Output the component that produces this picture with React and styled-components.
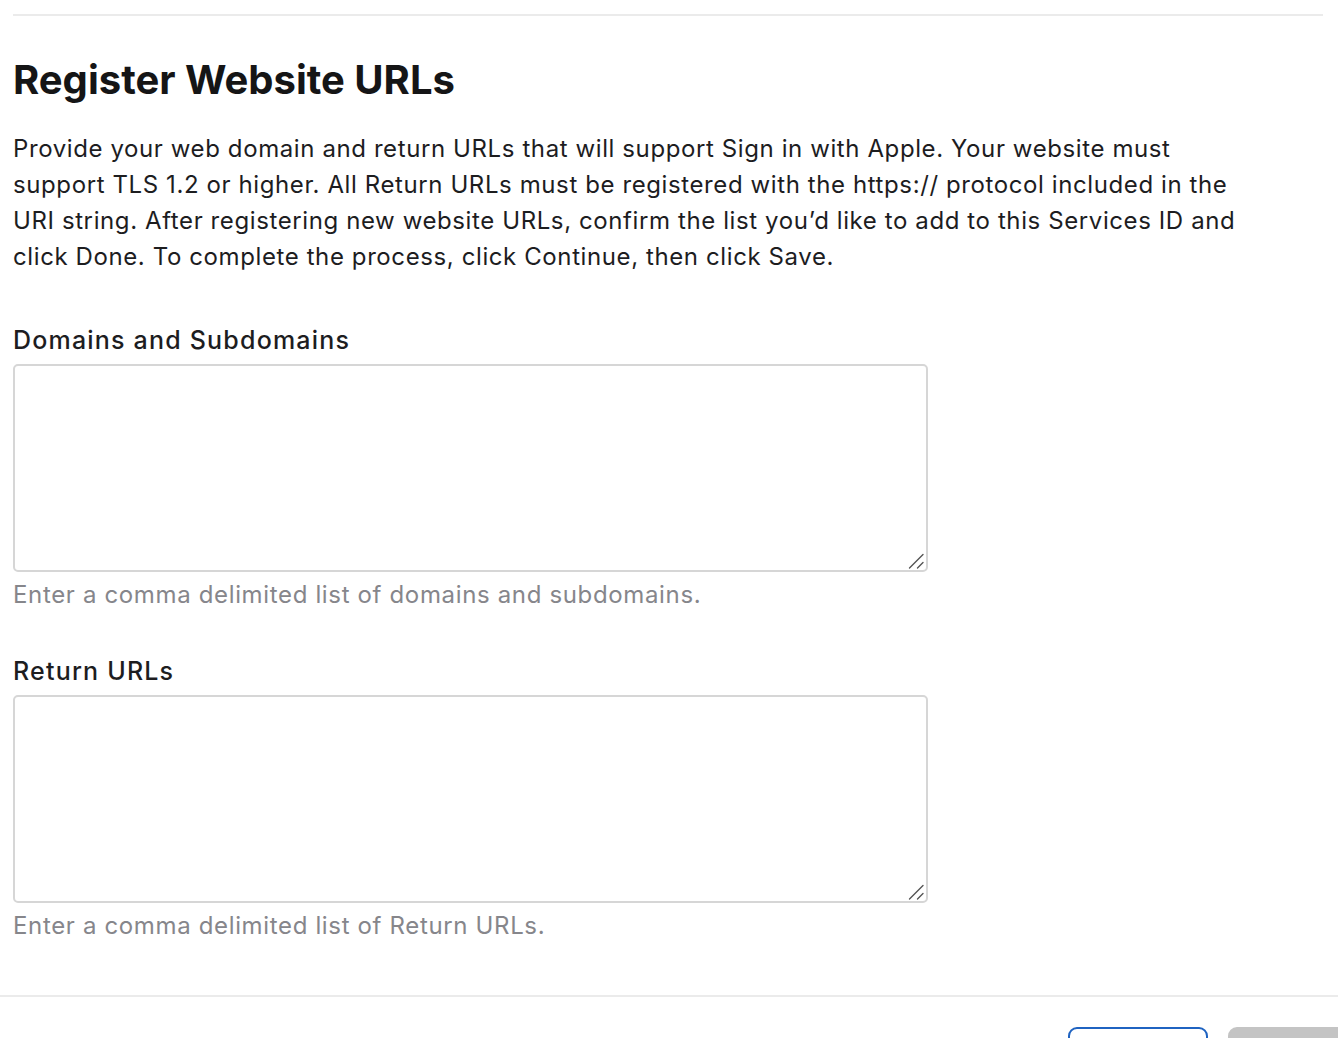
import React from "react";
import styled, { createGlobalStyle } from "styled-components";

const Global = createGlobalStyle`
  html, body { margin: 0; padding: 0; background: #fff; }
  body { font-family: Inter, "Noto Sans", "Liberation Sans", sans-serif; color: #1d1d1f; }
  * { box-sizing: border-box; }
`;

const Page = styled.div`
  width: 1338px;
  height: 1038px;
  overflow: hidden;
  display: flex;
  flex-direction: column;
`;

const Content = styled.section`
  padding: 14px 15px 0 13px;
  display: flex;
  flex-direction: column;
`;

const TopRule = styled.hr`
  margin: 0;
  border: 0;
  height: 2px;
  background: #ebebeb;
`;

const Title = styled.h1`
  margin: 40px 0 0;
  font-size: 40px;
  line-height: 48px;
  font-weight: 700;
  letter-spacing: 0px;
  color: #151516;
`;

const Intro = styled.p`
  margin: 27px 0 0;
  font-size: 24px;
  line-height: 36px;
  font-weight: 400;
  letter-spacing: 0.6px;
  white-space: nowrap;
  color: #1d1d1f;
`;

const Field = styled.div`
  display: flex;
  flex-direction: column;
  margin-top: ${(p) => p.$top}px;
`;

const Label = styled.label`
  font-size: 25px;
  line-height: 32px;
  font-weight: 500;
  letter-spacing: 1.2px;
  color: #1d1d1f;
`;

const AreaWrap = styled.div`
  position: relative;
  margin-top: 8px;
  width: 915px;
  height: 208px;
`;

const Area = styled.textarea`
  display: block;
  width: 100%;
  height: 100%;
  border: 2px solid #d6d6d6;
  border-radius: 5px;
  resize: none;
  font: inherit;
  font-size: 24px;
  padding: 8px 12px;
  outline: none;
  background: #fff;
`;

const Grip = styled.svg`
  position: absolute;
  right: 4px;
  bottom: 3px;
  width: 16px;
  height: 16px;
  pointer-events: none;
`;

const Help = styled.div`
  margin-top: 7px;
  font-size: 24px;
  line-height: 32px;
  letter-spacing: 0.65px;
  color: #86868b;
`;

const Footer = styled.footer`
  margin-top: auto;
  border-top: 2px solid #ebebeb;
  height: 43px;
  display: flex;
  align-items: flex-start;
  gap: 20px;
  padding: 30px 0 0 1068px;
`;

const Button = styled.button`
  flex: none;
  width: 140px;
  height: 44px;
  border-radius: 9px;
  font: inherit;
  font-size: 20px;
  border: 2px solid ${(p) => (p.$primary ? "#c4c4c4" : "#1f63c1")};
  background: ${(p) => (p.$primary ? "#c4c4c4" : "#fff")};
  color: ${(p) => (p.$primary ? "#fff" : "#1f63c1")};
`;

function TextBox() {
  return (
    <AreaWrap>
      <Area />
      <Grip viewBox="0 0 16 16">
        <path d="M1.5 15 L15 1.5 M9.5 15 L15 9.5" stroke="#555" strokeWidth="1.4" strokeLinecap="round" fill="none" />
      </Grip>
    </AreaWrap>
  );
}

export default function App() {
  return (
    <Page>
      <Global />
      <Content>
        <TopRule />
        <Title>Register Website URLs</Title>
        <Intro>
          Provide your web domain and return URLs that will support Sign in with Apple. Your website must
          <br />
          support TLS 1.2 or higher. All Return URLs must be registered with the https:// protocol included in the
          <br />
          URI string. After registering new website URLs, confirm the list you’d like to add to this Services ID and
          <br />
          click Done. To complete the process, click Continue, then click Save.
        </Intro>
        <Field $top={49}>
          <Label>Domains and Subdomains</Label>
          <TextBox />
          <Help>Enter a comma delimited list of domains and subdomains.</Help>
        </Field>
        <Field $top={44}>
          <Label>Return URLs</Label>
          <TextBox />
          <Help>Enter a comma delimited list of Return URLs.</Help>
        </Field>
      </Content>
      <Footer>
        <Button>Back</Button>
        <Button $primary>Done</Button>
      </Footer>
    </Page>
  );
}
